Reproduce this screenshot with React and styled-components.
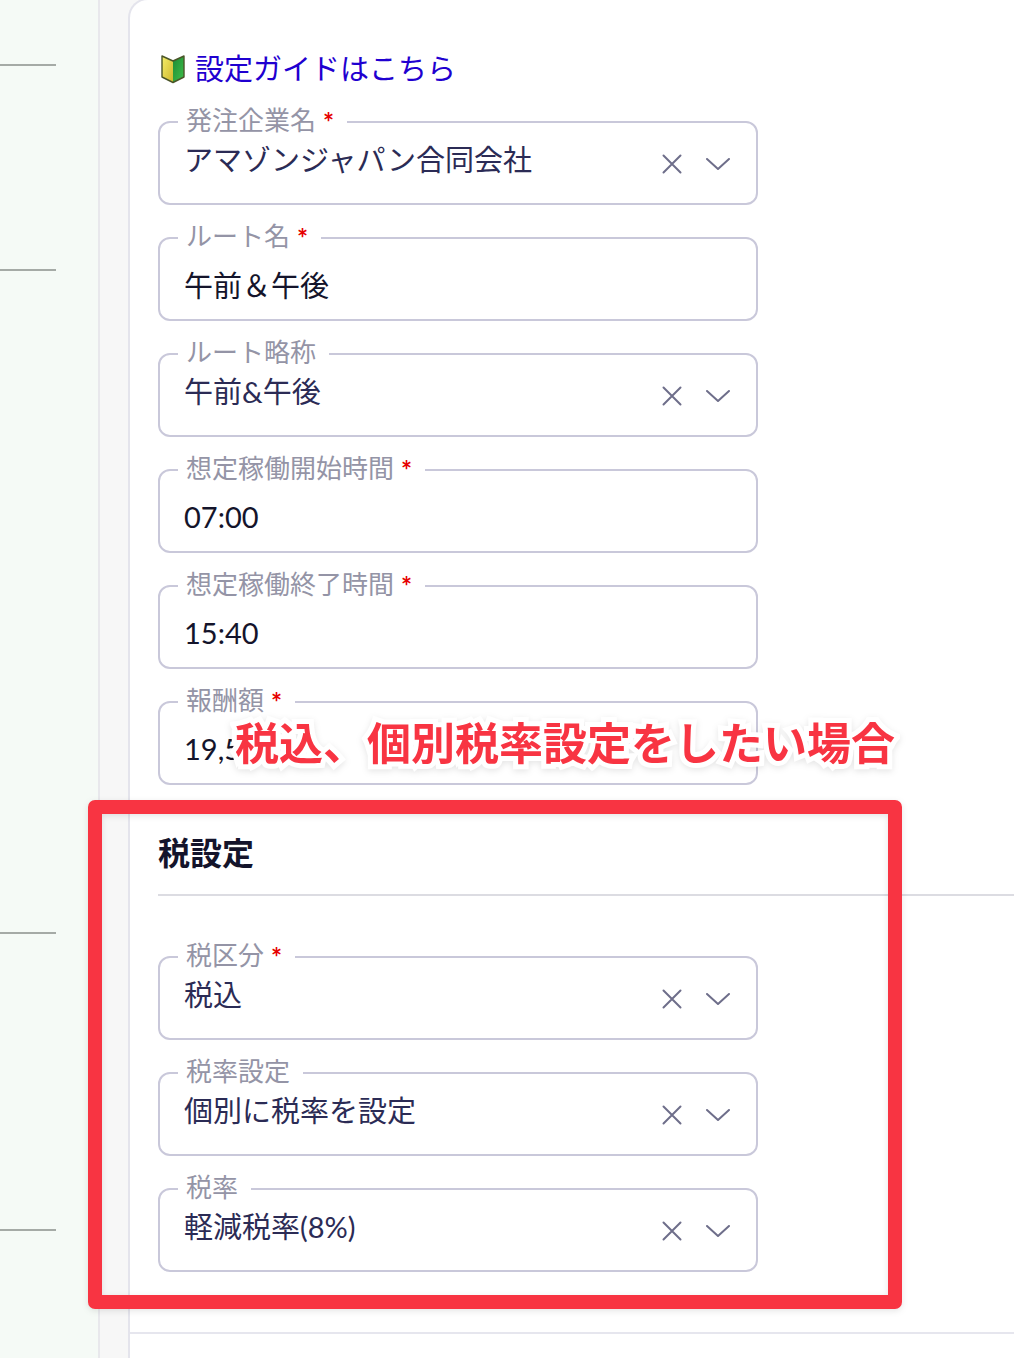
import React, { useState } from "react";
import styled, { createGlobalStyle } from "styled-components";

const GlobalStyle = createGlobalStyle`
  * {
    box-sizing: border-box;
  }

  body {
    margin: 0;
    background-color: #f7f7f7;
    font-family: Lato, "Noto Sans CJK JP", sans-serif;
    color: #14142b;
  }
`;

const BeginnerMark = () => (
  <svg width="26" height="30" viewBox="0 0 26 30" aria-hidden="true">
    <defs>
      <linearGradient id="leafYellow" x1="0" y1="0" x2="1" y2="1">
        <stop offset="0" stopColor="#f3ee6a" />
        <stop offset="1" stopColor="#cfb62c" />
      </linearGradient>
      <linearGradient id="leafGreen" x1="0" y1="0" x2="1" y2="1">
        <stop offset="0" stopColor="#1d8a35" />
        <stop offset="1" stopColor="#3fc04a" />
      </linearGradient>
    </defs>
    <path d="M2 2 L13 7 V28.5 L2 23 Z" fill="url(#leafYellow)" />
    <path d="M24 2 L13 7 V28.5 L24 23 Z" fill="url(#leafGreen)" />
    <path
      d="M2 2 L13 7 L24 2 V23 L13 28.5 L2 23 Z"
      fill="none"
      stroke="#4a5528"
      strokeWidth="1.4"
      strokeLinejoin="round"
    />
  </svg>
);

const CrossIcon = () => (
  <svg width="20" height="20" viewBox="0 0 20 20" aria-hidden="true">
    <path d="M1.5 1.5 L18.5 18.5 M18.5 1.5 L1.5 18.5" />
  </svg>
);

const ChevronIcon = () => (
  <svg width="24" height="12" viewBox="0 0 24 12" aria-hidden="true">
    <path d="M1 1 L12 11 L23 1" />
  </svg>
);

const FieldLabel = ({ id, label, required }) => (
  <Legend>
    <label htmlFor={id}>{label}</label>
    {required && <Required>*</Required>}
  </Legend>
);

const SelectField = ({ id, label, required, option }) => {
  const [value, setValue] = useState(option);

  return (
    <Field>
      <FieldLabel id={id} label={label} required={required} />
      <SelectRow>
        <Select id={id} value={value} onChange={(e) => setValue(e.target.value)}>
          <option value=""></option>
          <option value={option}>{option}</option>
        </Select>
        <ClearButton type="button" aria-label="クリア" onClick={() => setValue("")}>
          <CrossIcon />
        </ClearButton>
        <ChevronIcon />
      </SelectRow>
    </Field>
  );
};

const TextField = ({ id, label, required, initial }) => {
  const [value, setValue] = useState(initial);

  return (
    <Field>
      <FieldLabel id={id} label={label} required={required} />
      <InputRow>
        <Input
          id={id}
          type="text"
          value={value}
          onChange={(e) => setValue(e.target.value)}
        />
      </InputRow>
    </Field>
  );
};

const App = () => {
  return (
    <>
      <GlobalStyle />
      <Page>
        <Sidebar>
          <SideGroup $height={66} />
          <SideGroup $height={205} />
          <SideGroup $height={663} />
          <SideGroup $height={297} />
        </Sidebar>
        <Card>
          <Form>
            <GuideLink href="#guide">
              <BeginnerMark />
              設定ガイドはこちら
            </GuideLink>
            <SelectField id="company" label="発注企業名" required option="アマゾンジャパン合同会社" />
            <TextField id="route" label="ルート名" required initial="午前＆午後" />
            <SelectField id="routeShort" label="ルート略称" option="午前&午後" />
            <TextField id="start" label="想定稼働開始時間" required initial="07:00" />
            <TextField id="end" label="想定稼働終了時間" required initial="15:40" />
            <TextField id="reward" label="報酬額" required initial="19,500" />
          </Form>
          <TaxSection>
            <Title>税設定</Title>
            <TaxFields>
              <SelectField id="taxType" label="税区分" required option="税込" />
              <SelectField id="taxSetting" label="税率設定" option="個別に税率を設定" />
              <SelectField id="taxRate" label="税率" option="軽減税率(8%)" />
            </TaxFields>
            <Highlight>
              <Note>税込、個別税率設定をしたい場合</Note>
            </Highlight>
          </TaxSection>
          <Footer />
        </Card>
      </Page>
    </>
  );
};

const Page = styled.div`
  display: flex;
  min-height: 100vh;
  overflow: hidden;
`;

const Sidebar = styled.aside`
  flex: none;
  width: 100px;
  background-color: #f5faf6;
  border-right: 2px solid #e8e8ec;
`;

const SideGroup = styled.div`
  width: 56px;
  height: ${(props) => props.$height}px;
  border-bottom: 2px solid #a5aaa6;
`;

const Card = styled.main`
  flex: 1;
  min-width: 0;
  display: flex;
  flex-direction: column;
  margin: -2px 0 0 28px;
  background-color: #fff;
  border: 2px solid #e4e4ec;
  border-width: 2px 0 0 2px;
  border-top-left-radius: 20px;
`;

const Form = styled.form`
  display: flex;
  flex-direction: column;
  align-items: flex-start;
  gap: 17px;
  padding: 49px 0 0 28px;
`;

const GuideLink = styled.a`
  display: flex;
  align-items: center;
  gap: 9px;
  height: 40px;
  padding-left: 2px;
  font-size: 29px;
  line-height: 40px;
  color: #1f00d0;
  text-decoration: none;
`;

const Field = styled.fieldset`
  width: 100%;
  max-width: 600px;
  min-width: 0;
  margin: 0;
  padding: 0;
  border: 2px solid #c9c8da;
  border-radius: 12px;
`;

const Legend = styled.legend`
  display: flex;
  align-items: flex-start;
  gap: 7px;
  height: 32px;
  margin-left: 18px;
  padding: 0 13px 0 8px;
  font-size: 26px;
  line-height: 28px;
  color: #9494a6;
`;

const Required = styled.span`
  font-weight: 700;
  line-height: 32px;
  color: #e60000;
`;

const SelectRow = styled.div`
  display: flex;
  align-items: center;
  height: 65px;
  padding: 0 26px 13px 24px;

  svg {
    display: block;
    flex: none;
    fill: none;
    stroke: #6e6e8a;
    stroke-width: 2;
    stroke-linecap: round;
    stroke-linejoin: round;
  }
`;

const InputRow = styled.div`
  height: 65px;
  padding: 0 24px;
`;

const Select = styled.select`
  flex: 1;
  min-width: 0;
  height: 52px;
  margin: 0;
  padding: 0 0 10px;
  border: none;
  outline: none;
  appearance: none;
  background: transparent;
  font-family: inherit;
  font-size: 29px;
  color: #2b2b55;
`;

const Input = styled.input`
  display: block;
  width: 100%;
  height: 60px;
  padding: 0;
  border: none;
  outline: none;
  background: transparent;
  font-family: inherit;
  font-size: 29px;
  color: #14142b;
`;

const ClearButton = styled.button`
  flex: none;
  margin: 0 24px 0 0;
  padding: 0;
  border: none;
  background: transparent;
  cursor: pointer;
`;

const TaxSection = styled.section`
  position: relative;
  margin-top: 15px;
  padding: 29px 0 37px 28px;
`;

const Title = styled.h2`
  margin: 0 0 45px;
  padding-bottom: 17px;
  border-bottom: 2px solid #dcdce2;
  font-size: 32px;
  line-height: 48px;
  font-weight: 700;
`;

const TaxFields = styled.div`
  display: flex;
  flex-direction: column;
  gap: 17px;
`;

/* red frame laid over the tax section */
const Highlight = styled.div`
  position: absolute;
  top: 0;
  bottom: 0;
  left: -42px;
  width: 814px;
  pointer-events: none;
  border-radius: 7px;
  border: 14px solid #f83442;
  filter: drop-shadow(0 2px 3px rgba(0, 0, 0, 0.1));
`;

const Note = styled.p`
  position: absolute;
  right: -7px;
  bottom: 100%;
  margin: 0 0 39px;
  font-size: 44px;
  line-height: 64px;
  font-weight: 700;
  white-space: nowrap;
  color: #f83442;
  -webkit-text-stroke: 10px #fff;
  paint-order: stroke fill;
  stroke-linejoin: round;
`;

const Footer = styled.footer`
  flex: 1;
  margin-top: 23px;
  border-top: 2px solid #e6e6ee;
`;

export default App;
